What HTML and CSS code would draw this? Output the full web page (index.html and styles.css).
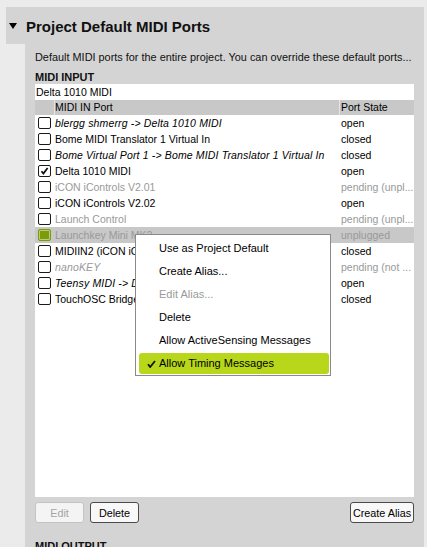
FILE: index.html
```html
<!DOCTYPE html>
<html>
<head>
<meta charset="utf-8">
<link rel="stylesheet" href="styles.css">
</head>
<body>
<div class="panel">
  <div class="panel-header">
    <span class="tri"></span>
    <span class="title">Project Default MIDI Ports</span>
  </div>
  <div class="panel-body">
    <div class="desc">Default MIDI ports for the entire project. You can override these default ports...</div>
    <div class="label">MIDI INPUT</div>
    <div class="selected">Delta 1010 MIDI</div>
    <div class="table">
      <div class="thead">
        <div class="th c0"></div>
        <div class="th c1">MIDI IN Port</div>
        <div class="th c2">Port State</div>
      </div>
      <div class="row"><span class="cb"></span><span class="name it">blergg shmerrg -&gt; Delta 1010 MIDI</span><span class="state">open</span></div>
      <div class="row"><span class="cb"></span><span class="name">Bome MIDI Translator 1 Virtual In</span><span class="state">closed</span></div>
      <div class="row"><span class="cb"></span><span class="name it">Bome Virtual Port 1 -&gt; Bome MIDI Translator 1 Virtual In</span><span class="state">closed</span></div>
      <div class="row"><span class="cb"><svg class="tick" viewBox="0 0 11 10" width="11" height="10"><path d="M2.5 5.2 L4.4 7.6 L8.6 2" fill="none" stroke="#111" stroke-width="1.8"/></svg></span><span class="name">Delta 1010 MIDI</span><span class="state">open</span></div>
      <div class="row dis"><span class="cb"></span><span class="name">iCON iControls V2.01</span><span class="state">pending (unpl...</span></div>
      <div class="row"><span class="cb"></span><span class="name">iCON iControls V2.02</span><span class="state">open</span></div>
      <div class="row dis"><span class="cb"></span><span class="name">Launch Control</span><span class="state">pending (unpl...</span></div>
      <div class="row dis sel"><span class="cb green"></span><span class="name">Launchkey Mini MK2</span><span class="state">unplugged</span></div>
      <div class="row"><span class="cb"></span><span class="name">MIDIIN2 (iCON iControls V2.02)</span><span class="state">closed</span></div>
      <div class="row dis"><span class="cb"></span><span class="name it">nanoKEY</span><span class="state">pending (not ...</span></div>
      <div class="row"><span class="cb"></span><span class="name it">Teensy MIDI -&gt; Delta 1010 MIDI</span><span class="state">open</span></div>
      <div class="row"><span class="cb"></span><span class="name">TouchOSC Bridge</span><span class="state">closed</span></div>
    </div>
    <div class="buttons">
      <button class="btn disabled">Edit</button>
      <button class="btn">Delete</button>
      <span class="spacer"></span>
      <button class="btn wide">Create Alias</button>
    </div>
    <div class="label out">MIDI OUTPUT</div>
  </div>
</div>

<div class="menu">
  <div class="item">Use as Project Default</div>
  <div class="item">Create Alias...</div>
  <div class="item disabled">Edit Alias...</div>
  <div class="item">Delete</div>
  <div class="item">Allow ActiveSensing Messages</div>
  <div class="item hl"><svg class="mcheck" viewBox="0 0 9 8" width="9" height="8"><path d="M1 4.3 L3.2 7 L8 1" fill="none" stroke="#111" stroke-width="1.8"/></svg>Allow Timing Messages</div>
</div>
</body>
</html>
```

FILE: styles.css
```css
html, body {
  margin: 0;
  padding: 0;
}
body {
  background: #ebebeb;
  font-family: "Liberation Sans", Arial, sans-serif;
  color: #000;
  width: 427px;
  height: 547px;
  overflow: hidden;
  position: relative;
}
.panel {
  margin: 7px 0 0 6px;
  width: 418px;
}
.panel-header {
  height: 35px;
  padding-top: 2px;
  background: #d4d4d4;
  display: flex;
  align-items: center;
}
.tri {
  width: 0;
  height: 0;
  border-left: 4px solid transparent;
  border-right: 4px solid transparent;
  border-top: 6px solid #000;
  margin-left: 3px;
  margin-right: 9px;
  margin-top: -1px;
}
.title {
  font-weight: bold;
  font-size: 15px;
  line-height: 35px;
  color: #111;
}
.panel-body {
  margin-left: 19px;
  background: #d4d4d4;
  padding: 6px 10px 0 10px;
  height: 520px;
}
.desc {
  font-size: 10.9px;
  line-height: 14px;
  white-space: nowrap;
  color: #111;
}
.label {
  margin-top: 6px;
  font-size: 11px;
  font-weight: bold;
  line-height: 14px;
  color: #111;
}
.label.out {
  margin-top: 16px;
}
.selected {
  background: #fff;
  height: 16px;
  line-height: 16px;
  font-size: 10.5px;
  padding-left: 1px;
}
.table {
  background: #fff;
  height: 397px;
  font-size: 10.5px;
}
.thead {
  display: grid;
  grid-template-columns: 20px 285px 74px;
  height: 15px;
  background: #c8c8c8;
}
.th {
  line-height: 15px;
  padding-left: 1px;
  white-space: nowrap;
  overflow: hidden;
}
.th.c0, .th.c1 {
  border-right: 1px solid #e4e4e4;
}
.th.c1 {
  padding-left: 0;
}
.row {
  display: grid;
  grid-template-columns: 20px 285px 74px;
  height: 16px;
  align-items: center;
}
.row.sel {
  background: #c8c8c8;
}
.cb {
  width: 11px;
  height: 10px;
  border: 1px solid #1a1a1a;
  border-radius: 2px;
  margin-left: 3px;
  background: #fff;
  display: flex;
  align-items: center;
  justify-content: center;
}
.cb.green {
  background: #7b9b0b;
  border-color: #7b9b0b;
  box-shadow: inset 0 0 0 1px #b9cc7c;
}
.tick {
  display: block;
}
.name {
  white-space: nowrap;
  overflow: hidden;
  line-height: 16px;
}
.it {
  font-style: italic;
  letter-spacing: 0.15px;
}
.state {
  white-space: nowrap;
  overflow: hidden;
  padding-left: 1px;
  line-height: 16px;
}
.row.dis .name, .row.dis .state {
  color: #999;
}
.buttons {
  display: flex;
  gap: 6px;
  margin-top: 5px;
  height: 21px;
}
.spacer {
  flex: 1;
}
.btn {
  font-family: "Liberation Sans", Arial, sans-serif;
  font-size: 10.8px;
  height: 21px;
  width: 49px;
  padding: 0;
  border: 1px solid #4a4a4a;
  border-radius: 3px;
  background: #f8f8f8;
  color: #000;
}
.btn.disabled {
  border-color: #c4c4c4;
  color: #a4a4a4;
  background: #f4f4f4;
}
.btn.wide {
  width: 64px;
}
.menu {
  position: absolute;
  left: 135px;
  top: 234px;
  width: 194px;
  padding-top: 2px;
  background: #fff;
  border: 1px solid #8a8a8a;
  font-size: 11px;
}
.item {
  height: 23px;
  line-height: 23px;
  padding-left: 23px;
  white-space: nowrap;
  color: #000;
}
.item.disabled {
  color: #9a9a9a;
}
.item.hl {
  height: 21px;
  line-height: 21px;
  margin: 1px 1px 1px 3px;
  padding-left: 20px;
  background: #b8d71a;
  border-radius: 3px;
  position: relative;
}
.mcheck {
  position: absolute;
  left: 8px;
  top: 7px;
}
```
